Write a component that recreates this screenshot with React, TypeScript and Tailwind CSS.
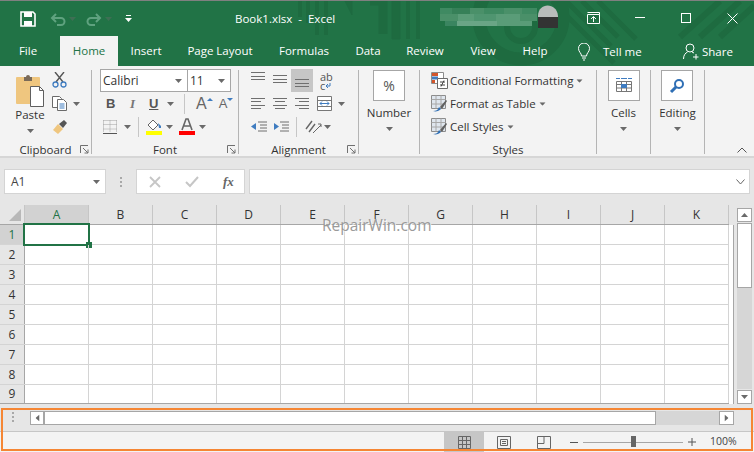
import React from "react";

const COLUMNS = ["A", "B", "C", "D", "E", "F", "G", "H", "I", "J", "K"];
const ROWS = [1, 2, 3, 4, 5, 6, 7, 8, 9];
const TABS = [
  { name: "File", width: "w-[60px] pr-[4px]" },
  { name: "Home", width: "w-[58px]" },
  { name: "Insert", width: "w-[56px]" },
  { name: "Page Layout", width: "w-[92px]" },
  { name: "Formulas", width: "w-[76px]" },
  { name: "Data", width: "w-[52px]" },
  { name: "Review", width: "w-[62px]" },
  { name: "View", width: "w-[54px]" },
  { name: "Help", width: "w-[50px]" },
];

function Caret({ className = "" }: { className?: string }) {
  return (
    <svg width="7" height="4" viewBox="0 0 7 4" className={"shrink-0 " + className}>
      <path d="M0 0h7L3.500 4z" fill="#6a6a6a" />
    </svg>
  );
}

function Launcher() {
  return (
    <svg width="9" height="9" viewBox="0 0 9 9" className="absolute right-[2px] bottom-[0px]">
      <path d="M.5 8V.5H8M3 3l5 5M8 4.500V8H4.500" fill="none" stroke="#707070" />
    </svg>
  );
}

function Lines({ widths, align = 0, step = 3.5 }: { widths: number[]; align?: number; step?: number }) {
  return (
    <svg width="16" height="14" viewBox="0 0 16 14" className="shrink-0">
      {widths.map((w, i) => (
        <rect
          key={i}
          x={align === 0 ? 0 : align === 1 ? (14 - w) / 2 : 14 - w}
          y={Math.round(1 + i * step)}
          width={w}
          height="1"
          fill="#6f6f6f"
        />
      ))}
    </svg>
  );
}

function Group({ label, width, children }: { label: string; width: string; children: React.ReactNode }) {
  return (
    <div className={"relative flex flex-col shrink-0 border-r border-[#b4b4b4] h-[84px] " + width}>
      <div className="h-[75px] shrink-0">{children}</div>
      <div className="h-[9px] flex items-center justify-center text-[11.5px] leading-[10px] text-[#333]">{label}</div>
    </div>
  );
}

function TallButton({ label, children }: { label: string; children: React.ReactNode }) {
  return (
    <div className="flex flex-col items-center">
      <div className="w-[32px] h-[31px] bg-white border border-[#a6a6a6] flex items-center justify-center">{children}</div>
      <div className="text-[11.5px] text-[#333] mt-[3px] leading-[18px]">{label}</div>
      <Caret className="mt-[5px]" />
    </div>
  );
}

function StyleRow({ icon, label }: { icon: React.ReactNode; label: string }) {
  return (
    <div className="flex items-center h-[23px]">
      <div className="w-[19px] shrink-0">{icon}</div>
      <span className="text-[11.5px] text-[#333] whitespace-nowrap">{label}</span>
      <Caret className="ml-[3px] scale-90" />
    </div>
  );
}

function TableBrush() {
  return (
    <svg width="17" height="17" viewBox="0 0 17 17">
      <path d="M.5.500h14v13H.5z" fill="#dfe6ee" stroke="#8c8c8c" />
      <path d="M.5 4.500h14M.5 9h14M5 .5v13M10 .5v13" stroke="#a8a8a8" fill="none" />
      <path d="M2 16c3 0 5-1 6-4l2 2c-2 2-5 3-8 2z" fill="#2f6fb5" />
      <path d="M9 12l6-7 1 1-5 8z" fill="#606060" />
    </svg>
  );
}

function TitleBackdrop() {
  return (
    <svg width="754" height="65" viewBox="0 0 754 65" className="absolute left-0 top-0" fill="none">
      <g stroke="#1e6b40">
        <path d="M300 0v16M308 0v22M317 0v34M326 0v34" strokeWidth="4" />
        <path d="M345 0l7 14V0z" fill="#1e6b40" strokeWidth="1" />
        <path d="M370 0h13v33" strokeWidth="9" />
        <path d="M392 0h8v38h-8z" fill="#1e6b40" strokeWidth="1" />
        <path d="M408 0v38M418 0v38" strokeWidth="4" />
        <circle cx="521" cy="16" r="42" strokeWidth="13" />
        <circle cx="521" cy="26" r="14" strokeWidth="6" />
        <path d="M552 0l62 62M566 0l45 45M582 0l36 36M598 0l38 38" strokeWidth="5" />
        <path d="M680 36L720 0M700 36L740 0M720 36L754 5" strokeWidth="6" />
      </g>
    </svg>
  );
}

function BlurredAccount() {
  const cells = [
    [440, 7, 12, 6, "#3f8a62"], [452, 7, 18, 6, "#368058"], [470, 7, 14, 6, "#4a9069"], [484, 7, 20, 6, "#3f8a62"],
    [504, 7, 18, 6, "#4a9069"], [522, 7, 15, 6, "#3f8a62"], [440, 13, 18, 7, "#4a9069"], [458, 13, 16, 7, "#5a9c78"],
    [474, 13, 22, 7, "#4f9570"], [496, 13, 24, 7, "#5a9c78"], [520, 13, 17, 7, "#4a9069"], [445, 20, 12, 5, "#3a8560"],
    [457, 20, 40, 5, "#6aa586"], [497, 20, 35, 5, "#5a9c78"],
  ] as const;
  return (
    <svg width="754" height="36" viewBox="0 0 754 36" className="absolute left-0 top-0">
      {cells.map((c, i) => (
        <rect key={i} x={c[0]} y={c[1]} width={c[2]} height={c[3]} fill={c[4]} />
      ))}
      <path d="M538 15c0-14 19-14 20 0v1h-20z" fill="#b9bcbb" />
      <rect x="538" y="16" width="20" height="11" fill="#333333" />
    </svg>
  );
}

function TitleBar() {
  return (
    <div className="relative h-[35px] flex items-center text-white">
      <div className="relative flex items-center pl-[20px]">
        <svg width="16" height="16" viewBox="0 0 16 16">
          <path d="M1 1h12l2 2v12H1z" fill="none" stroke="#fff" strokeWidth="1.600" />
          <rect x="4" y="1" width="8" height="5" fill="#fff" />
          <rect x="4" y="10" width="8" height="5" fill="#fff" />
        </svg>
        <svg width="16" height="14" viewBox="0 0 16 14" className="ml-[14px]" fill="none" stroke="#5fa27f" strokeWidth="2">
          <path d="M6 2L2 6l4 4M2 6h9a3.500 3.500 0 010 7H7" />
        </svg>
        <Caret className="ml-[3px] opacity-40" />
        <svg width="16" height="14" viewBox="0 0 16 14" className="ml-[10px]" fill="none" stroke="#5fa27f" strokeWidth="2">
          <path d="M10 2l4 4-4 4M14 6H5a3.500 3.500 0 000 7h4" />
        </svg>
        <Caret className="ml-[3px] opacity-40" />
        <svg width="7" height="7" viewBox="0 0 7 7" className="ml-[13px]">
          <path d="M1 0h5v1H1zM0 3h7L3.500 7z" fill="#fff" />
        </svg>
      </div>
      <div className="absolute left-[235px] text-[11.5px] whitespace-pre">Book1.xlsx  -  Excel</div>
      <svg width="14" height="12" viewBox="0 0 14 12" className="absolute left-[587px] top-[11px]" fill="none" stroke="#fff">
        <path d="M.5 2.500h12v9H.5zM.5.500h12v2M6.500 10V5M4 7l2.500-2.500L9 7" />
      </svg>
      <div className="absolute left-[635px] top-[16px] w-[10px] h-px bg-white" />
      <div className="absolute left-[681px] top-[12px] w-[10px] h-[10px] border border-white" />
      <svg width="11" height="11" viewBox="0 0 11 11" className="absolute left-[727px] top-[12px]">
        <path d="M.5.500l10 10M10.500.500l-10 10" stroke="#fff" />
      </svg>
    </div>
  );
}

function TabsRow() {
  return (
    <div className="relative h-[30px] flex items-stretch text-[11.5px] text-white">
      {TABS.map((t) => (
        <div
          key={t.name}
          className={
            "flex items-center justify-center shrink-0 " +
            t.width +
            (t.name === "Home" ? " bg-[#f3f3f3] text-[#217346]" : "")
          }
        >
          {t.name}
        </div>
      ))}
      <svg width="14" height="18" viewBox="0 0 14 18" className="absolute left-[577px] top-[7px]" fill="none" stroke="#fff">
        <path d="M4.500 13c0-3-3-4-3-7.500a5.500 5.500 0 0111 0c0 3.500-3 4.500-3 7.500zM5 15h4M6 17h2" />
      </svg>
      <div className="absolute left-[603px] top-[7px]">Tell me</div>
      <svg width="16" height="17" viewBox="0 0 16 17" className="absolute left-[683px] top-[7px]" fill="none" stroke="#fff">
        <circle cx="7" cy="5" r="4" />
        <path d="M.5 16c0-4 2-6 4-7M9 9l2 1M10 14h5.500M13 11v5.500" />
      </svg>
      <div className="absolute left-[702px] top-[7px]">Share</div>
    </div>
  );
}

function ClipboardGroup() {
  return (
    <Group label="Clipboard" width="w-[92px]">
      <div className="flex pl-[15px] pt-[4px]">
        <div className="flex flex-col items-center w-[30px]">
          <svg width="30" height="34" viewBox="0 0 30 34">
            <rect x="1" y="3" width="24" height="27" rx="1" fill="#efc67f" />
            <path d="M9 3h2a2 2 0 014 0h2v4H9z" fill="#7a6a58" />
            <path d="M15.500 12.500h9l4 4v16h-13z" fill="#fff" stroke="#5f5f5f" />
            <path d="M24.500 12.500v4h4" fill="none" stroke="#5f5f5f" />
          </svg>
          <div className="text-[11.5px] text-[#333] leading-[16px] -mt-[1px]">Paste</div>
          <Caret className="mt-[6px]" />
        </div>
        <div className="flex flex-col ml-[7px] -mt-[2px]">
          <svg width="16" height="16" viewBox="0 0 16 16" fill="none">
            <path d="M3 0l8 10M12 0L4 10" stroke="#555" strokeWidth="1.400" />
            <circle cx="3.500" cy="12.500" r="2.500" stroke="#3f7cc0" strokeWidth="1.300" />
            <circle cx="11.500" cy="12.500" r="2.500" stroke="#3f7cc0" strokeWidth="1.300" />
          </svg>
          <div className="flex items-center mt-[8px]">
            <svg width="16" height="15" viewBox="0 0 16 15" fill="none">
              <path d="M.5.500h7l2 2v9h-9z" fill="#fff" stroke="#6a6a6a" />
              <path d="M5.500 3.500h6l3 3v8h-9z" fill="#fff" stroke="#6a6a6a" />
              <path d="M7.500 8h5M7.500 10h5M7.500 12h5" stroke="#3f7cc0" />
            </svg>
            <Caret className="ml-[5px]" />
          </div>
          <svg width="16" height="15" viewBox="0 0 16 15" className="mt-[8px]">
            <path d="M1 11l5-6 5 5-5 5z" fill="#efc67f" />
            <path d="M7 5l5-4 3 3-4 5z" fill="#555" />
          </svg>
        </div>
      </div>
      <Launcher />
    </Group>
  );
}

function FontGroup() {
  return (
    <Group label="Font" width="w-[147px]">
      <div className="pl-[8px] -mt-[1px]">
        <div className="flex h-[23px]">
          <div className="w-[88px] bg-white border border-[#a6a6a6] flex items-center justify-between pl-[2px] pr-[5px] text-[12px] text-[#333]">
            Calibri
            <Caret />
          </div>
          <div className="w-[43px] bg-white border border-l-0 border-[#a6a6a6] flex items-center justify-between pl-[2px] pr-[5px] text-[12px] text-[#333]">
            11
            <Caret />
          </div>
        </div>
        <div className="flex items-center h-[23px]">
          <span className="w-[22px] pl-[6px] text-[13px] font-bold text-[#555] font-['Liberation_Sans',sans-serif]">B</span>
          <span className="w-[22px] pl-[8px] text-[13px] italic font-bold text-[#777] font-['Liberation_Serif',serif]">I</span>
          <span className="w-[17px] pl-[1px] ml-[4px] text-[13px] font-bold underline text-[#555] font-['Liberation_Sans',sans-serif]">U</span>
          <Caret className="ml-[2px]" />
          <div className="w-px h-[20px] bg-[#c6c6c6] ml-[10px]" />
          <span className="ml-[11px] text-[16px] text-[#666] font-['Liberation_Sans',sans-serif]">A</span>
          <svg width="6" height="3" viewBox="0 0 6 3" className="mb-[8px]"><path d="M0 3h6L3 0z" fill="#3f7cc0" /></svg>
          <span className="ml-[6px] text-[13px] text-[#666] font-['Liberation_Sans',sans-serif]">A</span>
          <svg width="6" height="3" viewBox="0 0 6 3" className="mb-[8px]"><path d="M0 0h6L3 3z" fill="#3f7cc0" /></svg>
        </div>
        <div className="flex items-center h-[23px]">
          <svg width="14" height="14" viewBox="0 0 14 14" className="ml-[3px]">
            <path d="M.5.500h13M.5 4.500h13M.5 9h13M.5.500v12M7 .500v12M13.500.500v12" stroke="#a0a0a0" strokeDasharray="1 1" fill="none" />
            <path d="M0 13.500h14" stroke="#555" />
          </svg>
          <Caret className="ml-[7px]" />
          <div className="w-px h-[20px] bg-[#c6c6c6] ml-[7px]" />
          <svg width="16" height="17" viewBox="0 0 16 17" className="ml-[7px]">
            <path d="M2 7l5-5 5 5-5 5z" fill="#fff" stroke="#666" />
            <path d="M12 5l3 3v2h-2z" fill="#3f7cc0" />
            <rect y="13" width="16" height="4" fill="#ffff00" />
          </svg>
          <Caret className="ml-[4px]" />
          <svg width="16" height="17" viewBox="0 0 16 17" className="ml-[6px]">
            <path d="M3 12L7 1h2l4 11M5 8h6" fill="none" stroke="#666" strokeWidth="1.600" />
            <rect y="13" width="16" height="4" fill="#ff0000" />
          </svg>
          <Caret className="ml-[4px]" />
        </div>
      </div>
      <Launcher />
    </Group>
  );
}

function AlignmentGroup() {
  return (
    <Group label="Alignment" width="w-[120px]">
      <div className="pl-[12px] -mt-[1px]">
        <div className="flex items-start h-[23px]">
          <div className="mt-[2px] w-[22px]"><Lines widths={[14, 14, 14]} /></div>
          <div className="mt-[5px] w-[18px]"><Lines widths={[14, 14, 14]} /></div>
          <div className="w-[22px] h-[23px] bg-[#c6c6c6] pl-[4px] pt-[9px]"><Lines widths={[14, 14, 14]} /></div>
          <div className="ml-[7px] pt-[3px] flex flex-col text-[11px] text-[#555]">
            <span className="h-[9px] leading-[9px]">ab</span>
            <div className="h-[9px] leading-[9px] flex items-center">
              c
              <svg width="5" height="5" viewBox="0 0 5 5" className="ml-[1px]"><path d="M0 3h4V0M0 3l2-2M0 3l2 2" stroke="#3f7cc0" fill="none" /></svg>
            </div>
          </div>
        </div>
        <div className="flex items-center h-[23px]">
          <div className="w-[22px]"><Lines widths={[14, 10, 14, 10]} step={3.3} /></div>
          <div className="w-[22px]"><Lines widths={[14, 10, 14, 10]} align={1} step={3.3} /></div>
          <div className="w-[22px]"><Lines widths={[14, 10, 14, 10]} align={2} step={3.3} /></div>
          <svg width="16" height="15" viewBox="0 0 16 15">
            <path d="M.5.500h14v14H.5zM.5 4.500h14M.5 10.500h14" fill="#fff" stroke="#777" />
            <path d="M3 7.500h9M3 7.500l2-2M3 7.500l2 2M12 7.500l-2-2M12 7.500l-2 2" stroke="#3f7cc0" fill="none" />
          </svg>
          <Caret className="ml-[5px]" />
        </div>
        <div className="flex items-center h-[23px]">
          <svg width="16" height="14" viewBox="0 0 16 14" className="mr-[6px]">
            <path d="M7 2h9M9 5h7M9 8h7M7 11h9" stroke="#6f6f6f" fill="none" />
            <path d="M0 6.500L5 3v7z" fill="#3f7cc0" />
          </svg>
          <svg width="16" height="14" viewBox="0 0 16 14">
            <path d="M7 2h9M9 5h7M9 8h7M7 11h9" stroke="#6f6f6f" fill="none" />
            <path d="M6 6.500L1 3v7z" fill="#3f7cc0" />
          </svg>
          <div className="w-px h-[20px] bg-[#c6c6c6] ml-[7px]" />
          <svg width="18" height="16" viewBox="0 0 18 16" className="ml-[7px]" fill="none">
            <path d="M2 10l6-8M5 13l6-8" stroke="#666" strokeWidth="1.400" />
            <path d="M9 14l8-8M14 5h3v3" stroke="#666" />
          </svg>
          <Caret className="ml-[2px]" />
        </div>
      </div>
      <Launcher />
    </Group>
  );
}

function StylesGroup() {
  return (
    <Group label="Styles" width="w-[177px]">
      <div className="pl-[11px] -mt-[1px]">
        <StyleRow
          label="Conditional Formatting"
          icon={
            <svg width="17" height="17" viewBox="0 0 17 17">
              <path d="M.5.500h12v11H.5z" fill="#fff" stroke="#8c8c8c" />
              <rect x="1" y="1" width="6" height="3" fill="#d4552a" />
              <rect x="1" y="4.500" width="6" height="3" fill="#3f7cc0" />
              <rect x="1" y="8" width="3" height="3" fill="#d4552a" />
              <path d="M6.500 6.500h10v10h-10z" fill="#fff" stroke="#6a6a6a" />
              <path d="M9 10h5M9 13h5M13 8.500l-3 6" stroke="#444" />
            </svg>
          }
        />
        <StyleRow label="Format as Table" icon={<TableBrush />} />
        <StyleRow label="Cell Styles" icon={<TableBrush />} />
      </div>
    </Group>
  );
}

function Ribbon() {
  return (
    <div className="relative h-[92px] bg-[#f3f3f3] border-b-2 border-[#d6d6d6] pt-[4px] flex items-start">
      <ClipboardGroup />
      <FontGroup />
      <AlignmentGroup />
      <Group label="" width="w-[61px]">
        <div className="flex justify-center">
          <TallButton label="Number">
            <span className="text-[14px] text-[#555]">%</span>
          </TallButton>
        </div>
      </Group>
      <StylesGroup />
      <Group label="" width="w-[54px]">
        <div className="flex justify-center">
          <TallButton label="Cells">
            <svg width="16" height="17" viewBox="0 0 16 17" fill="none">
              <path d="M0 1.500h4M12 1.500h4M5 1.500h6" stroke="#3f7cc0" />
              <path d="M.5 4.500h15v10H.5zM.5 7.500h15M.5 11h15M5.500 4.500v10M10.500 4.500v10" stroke="#777" />
              <rect x="5" y="7" width="6" height="4" fill="#3f7cc0" />
            </svg>
          </TallButton>
        </div>
      </Group>
      <Group label="" width="w-[54px]">
        <div className="flex justify-center">
          <TallButton label="Editing">
            <svg width="16" height="16" viewBox="0 0 16 16" fill="none" stroke="#2f6fb5">
              <circle cx="10" cy="6" r="4" strokeWidth="2" />
              <path d="M7 9l-5 5" strokeWidth="3" />
            </svg>
          </TallButton>
        </div>
      </Group>
      <svg width="10" height="6" viewBox="0 0 10 6" className="absolute left-[737px] top-[81px]" fill="none">
        <path d="M.5 5.500L5 1l4.500 4.500" stroke="#555" />
      </svg>
    </div>
  );
}

function FormulaBar() {
  return (
    <div className="h-[47px] flex items-start pt-[11px] pl-[4px]">
      <div className="w-[102px] h-[25px] bg-white border border-[#d4d4d4] flex items-center justify-between pl-[6px] pr-[5px] text-[12px] text-[#444]">
        A1
        <Caret />
      </div>
      <div className="w-[30px] h-[25px] flex flex-col items-center justify-center gap-[2px]">
        <div className="w-[2px] h-[2px] bg-[#a8a8a8]" />
        <div className="w-[2px] h-[2px] bg-[#a8a8a8]" />
        <div className="w-[2px] h-[2px] bg-[#a8a8a8]" />
      </div>
      <div className="w-[109px] h-[25px] bg-white border border-[#d4d4d4] flex items-center pl-[12px]">
        <svg width="12" height="12" viewBox="0 0 12 12"><path d="M1 1l10 10M11 1L1 11" stroke="#c6c6c6" strokeWidth="1.800" /></svg>
        <svg width="14" height="12" viewBox="0 0 14 12" className="ml-[24px]"><path d="M1 6l4 4 8-9" fill="none" stroke="#c6c6c6" strokeWidth="2" /></svg>
        <span className="ml-[24px] text-[13px] italic font-bold text-[#666] font-['Liberation_Serif',serif]">fx</span>
      </div>
      <div className="ml-[4px] w-[501px] h-[25px] bg-white border border-[#d4d4d4] flex items-center justify-end pr-[4px]">
        <svg width="9" height="6" viewBox="0 0 9 6" fill="none"><path d="M.5.500L4.500 5l4-4.500" stroke="#666" /></svg>
      </div>
    </div>
  );
}

function Sheet() {
  return (
    <div className="flex h-[199px]">
      <div className="w-[729px] shrink-0 text-[12px] leading-[12px] text-[#333]">
        <div className="grid grid-cols-[25px_repeat(11,64px)] h-[20px] bg-[#e6e6e6] border-b border-[#a6a6a6]">
          <div className="relative border-r border-[#c6c6c6]">
            <svg width="12" height="12" viewBox="0 0 12 12" className="absolute left-[9px] top-[4px]"><path d="M12 0v12H0z" fill="#b8b8b8" /></svg>
          </div>
          {COLUMNS.map((c, i) => (
            <div
              key={c}
              className={
                "flex items-center justify-center border-r border-[#c6c6c6] " +
                (i === 0 ? "bg-[#d2d2d2] text-[#217346]" : "")
              }
            >
              {c}
            </div>
          ))}
        </div>
        {ROWS.map((r) => (
          <div
            key={r}
            className={
              "grid grid-cols-[25px_repeat(11,64px)] bg-white " +
              (r === 9 ? "h-[19px] border-b border-[#a6a6a6]" : "h-[20px] border-b border-[#d4d4d4]")
            }
          >
            <div
              className={
                "flex items-center justify-center border-r border-[#a6a6a6] " +
                (r === 1 ? "bg-[#d2d2d2] text-[#217346]" : "bg-[#e6e6e6]")
              }
            >
              {r}
            </div>
            {COLUMNS.map((c, i) => (
              <div key={c} className="relative border-r border-[#d4d4d4]">
                {r === 1 && i === 0 && (
                  <div className="absolute left-[-2px] top-[-2px] w-[67px] h-[23px] border-2 border-[#217346]">
                    <div className="absolute right-[-4px] bottom-[-4px] w-[6px] h-[6px] bg-[#217346]" />
                  </div>
                )}
              </div>
            ))}
          </div>
        ))}
      </div>
      <div className="w-[5px] bg-white border-r border-[#a6a6a6] mt-[20px]" />
      <div className="flex-1 flex flex-col pl-[3px] pr-[2px] pt-[3px] bg-[#e6e6e6]">
        <div className="h-[14px] w-[15px] bg-white border border-[#a6a6a6] flex items-center justify-center">
          <Caret className="rotate-180" />
        </div>
        <div className="flex-1 w-[15px] bg-[#d6d6d6] my-px">
          <div className="h-[65px] bg-white border border-[#a6a6a6]" />
        </div>
        <div className="h-[14px] w-[15px] bg-white border border-[#a6a6a6] flex items-center justify-center">
          <Caret />
        </div>
      </div>
    </div>
  );
}

function ScrollRow() {
  return (
    <div className="h-[27px] bg-[#e6e6e6] flex items-start pt-[7px] pl-[12px]">
      <div className="w-[18px] h-[13px] flex flex-col gap-[2px] pt-[1px]">
        <div className="w-[2px] h-[2px] bg-[#a8a8a8]" />
        <div className="w-[2px] h-[2px] bg-[#a8a8a8]" />
        <div className="w-[2px] h-[2px] bg-[#a8a8a8]" />
      </div>
      <div className="w-[14px] h-[14px] bg-white border border-[#a6a6a6] flex items-center justify-center">
        <Caret className="rotate-90" />
      </div>
      <div className="w-[612px] h-[14px] bg-white border border-[#a6a6a6]" />
      <div className="w-[63px] h-[14px] bg-[#d6d6d6]" />
      <div className="w-[15px] h-[14px] bg-white border border-[#a6a6a6] flex items-center justify-center">
        <Caret className="-rotate-90" />
      </div>
    </div>
  );
}

function StatusBar() {
  return (
    <div className="h-[21px] bg-[#f3f3f3] border-t border-[#c6c6c6] flex items-center justify-end text-[#444] pr-[18px]">
      <div className="w-[40px] h-[20px] bg-[#c6c6c6] flex items-center justify-center">
        <svg width="13" height="13" viewBox="0 0 13 13" fill="none"><path d="M.5.500h12v12H.5zM.5 4.500h12M.5 8.500h12M4.500.500v12M8.500.500v12" stroke="#666" /></svg>
      </div>
      <div className="w-[40px] flex items-center justify-center">
        <svg width="14" height="13" viewBox="0 0 14 13" fill="none"><path d="M.5.500h13v12H.5zM3.500 3.500h7v6h-7zM5 5.500h4M5 7.500h4" stroke="#666" /></svg>
      </div>
      <div className="w-[40px] flex items-center justify-center">
        <svg width="14" height="13" viewBox="0 0 14 13" fill="none"><path d="M.5.500h13v12H.5zM.5 7.500h6.500V.500" stroke="#666" /></svg>
      </div>
      <div className="ml-[6px] w-[8px] h-px bg-[#555]" />
      <div className="relative ml-[5px] w-[100px] h-px bg-[#a6a6a6]">
        <div className="absolute left-[48px] top-[-6px] w-[5px] h-[11px] bg-[#666]" />
      </div>
      <svg width="8" height="8" viewBox="0 0 8 8" className="ml-[5px]"><path d="M0 4h8M4 0v8" stroke="#555" /></svg>
      <div className="ml-[14px] w-[26px] text-[10.5px] whitespace-nowrap">100%</div>
    </div>
  );
}

export default function App() {
  return (
    <div className="relative w-[754px] h-[452px] overflow-hidden bg-[#e6e6e6] font-['Open_Sans',sans-serif]">
      <div className="h-px bg-[#808080]" />
      <div className="relative bg-[#217346]">
        <TitleBackdrop />
        <BlurredAccount />
        <TitleBar />
        <TabsRow />
      </div>
      <Ribbon />
      <FormulaBar />
      <Sheet />
      <ScrollRow />
      <StatusBar />
      <div className="absolute left-[322px] top-[219px] text-[15.5px] leading-[13px] text-[#9a9a9a] [text-shadow:1px_1px_0_#fff]">RepairWin.com</div>
      <div className="absolute left-[1px] top-[408px] w-[752px] h-[43px] border-2 border-[#f58634]" />
    </div>
  );
}
